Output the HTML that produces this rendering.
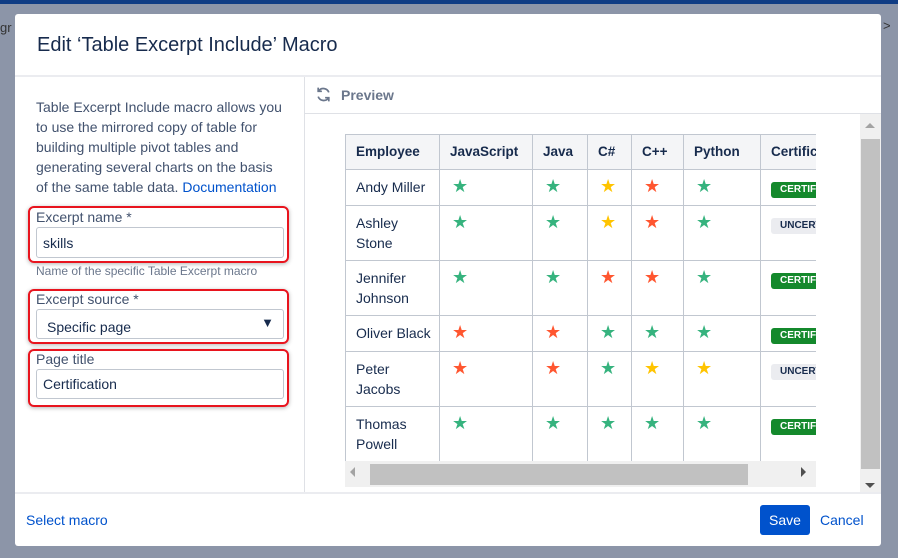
<!DOCTYPE html>
<html><head><style>
*{box-sizing:border-box;margin:0;padding:0}
body{width:898px;height:558px;background:#8c95a8;font-family:"Liberation Sans",sans-serif;color:#172b4d;position:relative;overflow:hidden}
.abs{position:absolute}
.topbar{left:0;top:0;width:898px;height:4px;background:#0f3c84}
.dlg{left:15px;top:14px;width:866px;height:532px;background:#fff;border-radius:3px}
h1{position:absolute;left:37px;top:34px;font-size:20px;font-weight:normal;color:#172b4d}
.sep{background:#ebecf0}
.desc{left:36px;top:97px;width:250px;font-size:14px;line-height:20px;color:#42526e}
.desc a{color:#0052cc;text-decoration:none}
.red{border:2px solid #e8141e;border-radius:6px;box-shadow:0 1px 4px rgba(0,0,0,.3)}
.lbl{font-size:14px;color:#42526e}
.inp{border:1px solid #c1c7d0;border-radius:3px;background:#fff;font-size:14px;color:#172b4d;padding-left:6px;display:flex;align-items:center}
table{border-collapse:collapse;font-size:14px;color:#172b4d;table-layout:fixed;width:541px}
td,th{border:1px solid #c1c7d0;padding:0 10px;vertical-align:top;line-height:20px;text-align:left;white-space:nowrap;overflow:hidden}
th{background:#f4f5f7;font-weight:bold;height:35px;vertical-align:middle;font-size:13.5px}
td{padding-top:7px}
td.s{font-size:18px;line-height:18px;padding-left:12px}
.g{color:#36b37e}.y{color:#ffc400}.r{color:#ff5630}
.bd{display:inline-block;font-size:10px;font-weight:bold;padding:0 9px;border-radius:3px;line-height:16px;margin-top:2px}
.c{background:#14892c;color:#fff}.u{background:#ebecf0;color:#172b4d}
</style></head><body>
<div class="abs topbar"></div>
<div class="abs" style="left:0;top:20px;font-size:13px;color:#333">gr</div>
<div class="abs" style="left:883px;top:18px;font-size:13px;color:#333">&gt;</div>
<div class="abs dlg"></div>
<h1>Edit ‘Table Excerpt Include’ Macro</h1>
<div class="abs sep" style="left:15px;top:75px;width:866px;height:2px"></div>
<div class="abs" style="left:304px;top:77px;width:1px;height:416px;background:#dfe1e6"></div>
<div class="abs desc">Table Excerpt Include macro allows you to use the mirrored copy of table for building multiple pivot tables and generating several charts on the basis of the same table data. <a>Documentation</a></div>
<div class="abs red" style="left:28px;top:206px;width:261px;height:57px"></div>
<div class="abs lbl" style="left:36px;top:209px">Excerpt name *</div>
<div class="abs inp" style="left:36px;top:227px;width:248px;height:31px">skills</div>
<div class="abs" style="left:36px;top:264px;font-size:12px;color:#6b778c">Name of the specific Table Excerpt macro</div>
<div class="abs red" style="left:28px;top:289px;width:261px;height:55px"></div>
<div class="abs lbl" style="left:36px;top:291px">Excerpt source *</div>
<div class="abs inp" style="left:36px;top:309px;width:248px;height:30px;padding-left:10px;padding-top:6px">Specific page<span style="position:absolute;right:9px;top:5px;font-size:13px">▼</span></div>
<div class="abs red" style="left:28px;top:349px;width:261px;height:58px"></div>
<div class="abs lbl" style="left:36px;top:351px">Page title</div>
<div class="abs inp" style="left:36px;top:369px;width:248px;height:30px">Certification</div>

<svg class="abs" style="left:315px;top:86px" width="17" height="17" viewBox="0 0 16 16" fill="none" stroke="#6b778c" stroke-width="1.6"><path d="M13 6A5.5 5.5 0 0 0 3.5 4.5M3 10a5.5 5.5 0 0 0 9.5 1.5"/><path d="M3 1.5v3.5h3.5M13 14.5V11H9.5"/></svg>
<div class="abs" style="left:341px;top:87px;font-size:14px;font-weight:bold;color:#6b778c">Preview</div>
<div class="abs" style="left:305px;top:113px;width:576px;height:1px;background:#dfe1e6"></div>

<div class="abs" style="left:345px;top:134px;width:471px;height:327px;overflow:hidden">
<table>
<colgroup><col style="width:94px"><col style="width:93px"><col style="width:55px"><col style="width:44px"><col style="width:52px"><col style="width:77px"><col style="width:126px"></colgroup>
<tr><th>Employee</th><th>JavaScript</th><th>Java</th><th>C#</th><th>C++</th><th>Python</th><th>Certification</th></tr>
<tr style="height:36px"><td>Andy Miller</td><td class="s g">★</td><td class="s g">★</td><td class="s y">★</td><td class="s r">★</td><td class="s g">★</td><td><span class="bd c">CERTIFIED</span></td></tr>
<tr style="height:55px"><td>Ashley<br>Stone</td><td class="s g">★</td><td class="s g">★</td><td class="s y">★</td><td class="s r">★</td><td class="s g">★</td><td><span class="bd u">UNCERTIFIED</span></td></tr>
<tr style="height:55px"><td>Jennifer<br>Johnson</td><td class="s g">★</td><td class="s g">★</td><td class="s r">★</td><td class="s r">★</td><td class="s g">★</td><td><span class="bd c">CERTIFIED</span></td></tr>
<tr style="height:36px"><td>Oliver Black</td><td class="s r">★</td><td class="s r">★</td><td class="s g">★</td><td class="s g">★</td><td class="s g">★</td><td><span class="bd c">CERTIFIED</span></td></tr>
<tr style="height:55px"><td>Peter<br>Jacobs</td><td class="s r">★</td><td class="s r">★</td><td class="s g">★</td><td class="s y">★</td><td class="s y">★</td><td><span class="bd u">UNCERTIFIED</span></td></tr>
<tr style="height:55px"><td>Thomas<br>Powell</td><td class="s g">★</td><td class="s g">★</td><td class="s g">★</td><td class="s g">★</td><td class="s g">★</td><td><span class="bd c">CERTIFIED</span></td></tr>
</table></div>
<div class="abs" style="left:345px;top:461px;width:471px;height:26px;background:#f0f0f0"></div>
<div class="abs" style="left:370px;top:464px;width:378px;height:21px;background:#c1c1c1"></div>
<div class="abs" style="left:350px;top:467px;width:0;height:0;border:5px solid transparent;border-right:5px solid #a3a3a3;border-left:0"></div>
<div class="abs" style="left:801px;top:467px;width:0;height:0;border:5px solid transparent;border-left:5px solid #505050;border-right:0"></div>
<div class="abs" style="left:860px;top:114px;width:21px;height:379px;background:#f0f0f0"></div>
<div class="abs" style="left:861px;top:139px;width:19px;height:330px;background:#c1c1c1"></div>
<div class="abs" style="left:865px;top:123px;border:5px solid transparent;border-bottom:5px solid #a3a3a3;border-top:0"></div>
<div class="abs" style="left:865px;top:483px;border:5px solid transparent;border-top:5px solid #505050;border-bottom:0"></div>

<div class="abs sep" style="left:15px;top:492px;width:866px;height:2px"></div>
<div class="abs" style="left:26px;top:512px;font-size:14px;color:#0052cc">Select macro</div>
<div class="abs" style="left:760px;top:505px;width:50px;height:30px;background:#0052cc;border-radius:3px;color:#fff;font-size:14px;display:flex;align-items:center;justify-content:center">Save</div>
<div class="abs" style="left:820px;top:512px;font-size:14px;color:#0052cc">Cancel</div>
</body></html>
